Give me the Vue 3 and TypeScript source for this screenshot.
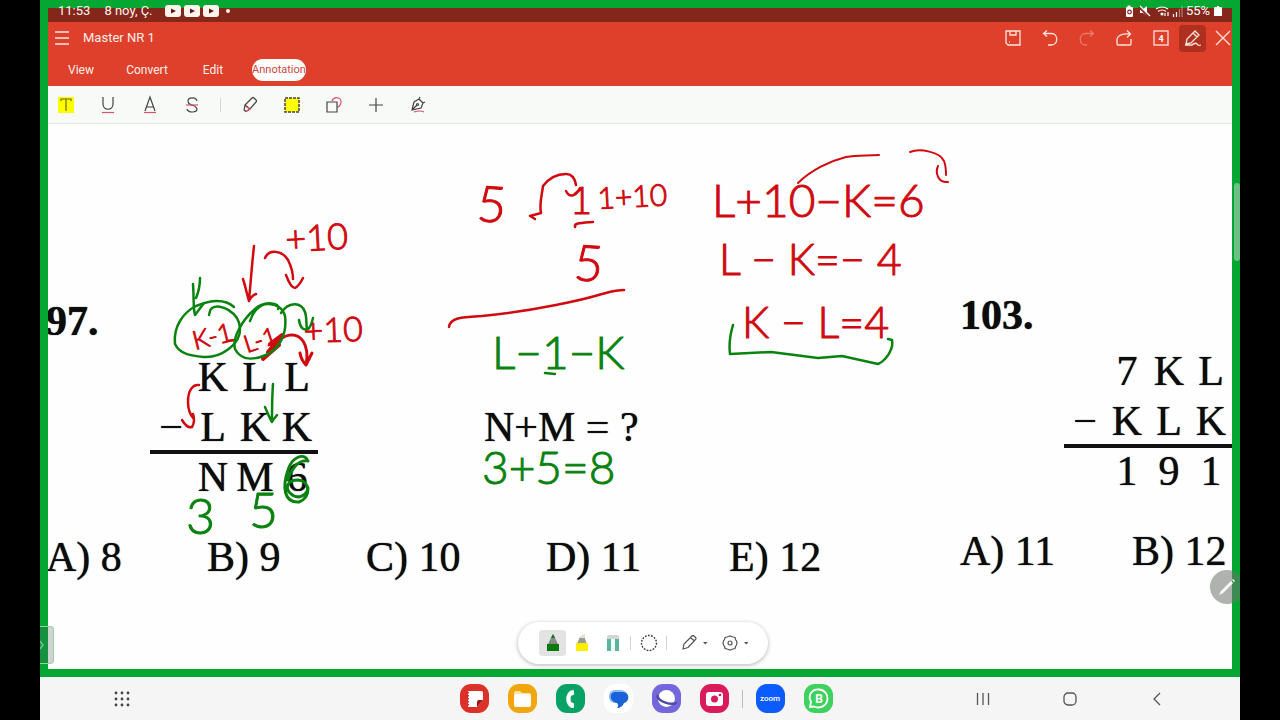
<script setup lang="ts">
interface Writing { t: string; x: number; y: number; s: number; c: 'red' | 'green'; r?: number }
interface Stroke { d: string; c: 'red' | 'green'; w?: number }

const tabs = ['View', 'Convert', 'Edit', 'Annotation']

const problems = [
  {
    no: '97.',
    rows: [['', 'K', 'L', 'L'], ['−', 'L', 'K', 'K'], ['', 'N', 'M', '6']],
    ask: 'N+M = ?',
    options: ['A) 8', 'B) 9', 'C) 10', 'D) 11', 'E) 12'],
  },
  {
    no: '103.',
    rows: [['', '7', 'K', 'L'], ['−', 'K', 'L', 'K'], ['', '1', '9', '1']],
    ask: '',
    options: ['A) 11', 'B) 12'],
  },
]

const writings: Writing[] = [
  { t: '+10', x: 286, y: 252, s: 36, c: 'red', r: -3 },
  { t: '+10', x: 304, y: 343, s: 34, c: 'red', r: -2 },
  { t: 'K-1', x: 195, y: 350, s: 26, c: 'red', r: -14 },
  { t: 'L-1', x: 247, y: 353, s: 24, c: 'red', r: -18 },
  { t: '5', x: 476, y: 221, s: 50, c: 'red', r: 4 },
  { t: '1', x: 570, y: 214, s: 38, c: 'red' },
  { t: '1+10', x: 598, y: 209, s: 30, c: 'red', r: -3 },
  { t: '5', x: 573, y: 280, s: 50, c: 'red', r: 4 },
  { t: 'L+10−K=6', x: 712, y: 217, s: 46, c: 'red' },
  { t: 'L − K=− 4', x: 719, y: 275, s: 43, c: 'red' },
  { t: 'K − L=4', x: 742, y: 338, s: 43, c: 'red' },
  { t: 'L−1−K', x: 492, y: 369, s: 46, c: 'green' },
  { t: '3+5=8', x: 482, y: 484, s: 46, c: 'green' },
  { t: '3', x: 186, y: 534, s: 50, c: 'green' },
  { t: '5', x: 249, y: 528, s: 50, c: 'green' },
]

const strokes: Stroke[] = [
  { c: 'red', d: 'M254 246C252 263 251 280 249 300M243 279C246 288 247 295 249 301C251 297 253 295 256 294' },
  { c: 'red', d: 'M265 258C269 249 282 250 288 260C291 266 293 272 293 279M286 275C289 283 292 288 295 288C299 286 301 282 303 278' },
  { c: 'red', d: 'M227 341L235 340' },
  { c: 'red', w: 4, d: 'M263 359L279 345M268 352L278 340M270 344L282 335' },
  { c: 'red', w: 3, d: 'M275 345C283 334 296 331 303 341C307 347 308 355 306 365M300 353C301 359 303 362 306 365L312 353' },
  { c: 'red', d: 'M199 385C193 384 188 390 188 402C188 411 190 415 194 419M182 420C185 425 189 428 192 427C195 422 194 417 193 414' },
  { c: 'red', d: 'M530 216L541 213M530 216L535 219M541 213C539 204 542 195 543 186C549 178 558 174 566 174C572 174 575 179 576 185M566 191C569 197 575 198 580 188' },
  { c: 'red', d: 'M575 227C574 223 580 223 593 222' },
  { c: 'red', d: 'M449 327C450 317 464 317 482 316C535 311 586 299 602 294C610 292 615 290 624 290' },
  { c: 'red', w: 2, d: 'M798 183C811 170 830 161 846 157C858 155 866 156 879 155' },
  { c: 'red', w: 2, d: 'M910 152C920 148 940 152 944 161C946 166 946 171 946 175M938 166C935 173 938 183 948 182' },
  { c: 'green', d: 'M193 284C194 297 193 307 195 315L204 303M200 278C200 283 199 291 196 298' },
  { c: 'green', d: 'M234 307C223 297 208 301 196 306C184 312 173 326 175 344C180 355 193 356 204 357C220 358 241 345 240 328C239 312 220 303 212 308C209 310 210 313 209 315' },
  { c: 'green', d: 'M278 309C281 302 264 301 255 309C242 320 232 338 235 349C241 361 254 360 266 355C281 348 287 332 285 316C283 308 276 304 269 304C259 303 252 314 250 321' },
  { c: 'green', d: 'M281 313C288 302 301 301 305 312C307 318 306 324 307 330M299 320C300 327 303 331 308 329C311 327 312 322 313 318' },
  { c: 'green', d: 'M273 384C272 397 272 409 272 420M265 407C268 414 270 419 272 422C274 418 276 417 277 415' },
  { c: 'green', d: 'M545 373L555 374' },
  { c: 'green', d: 'M733 325C730 335 729 346 730 354L771 352L818 358L842 356L878 364C885 361 894 350 892 340L888 339' },
  { c: 'green', w: 3, d: 'M308 461C304 452 292 457 288 470C282 487 284 503 299 502C311 498 311 481 298 480C287 480 285 488 290 493C298 501 307 495 308 488M308 461C297 459 290 472 288 480' },
]

const apps = ['notes', 'files', 'phone', 'messages', 'internet', 'camera']
</script>

<template>
  <div class="tablet">
    <div class="screen">
      <header class="status">
        <span class="clock">11:53</span>
        <span class="date">8 noy, Ç.</span>
        <svg v-for="n in 3" :key="n" class="yt" width="16" height="12" viewBox="0 0 16 12"><rect width="16" height="12" rx="3" fill="#fff3ee" /><path d="M6 3.500L11 6L6 8.500Z" fill="#5a1a10" /></svg>
        <i class="dot"></i>
        <span class="grow"></span>
        <svg width="98" height="14" viewBox="0 0 98 14" fill="none" stroke="#fff" stroke-width="1.200">
          <path d="M2 3h1.500V1.500h3V3H8q1 0 1 1v8q0 1-1 1H3q-1 0-1-1V4q0-1 1-1Z" fill="#fff" stroke="none" />
          <circle cx="5.500" cy="8" r="1.800" stroke="#84271a" />
          <path d="M16 5h3l4-3v10l-4-3h-3Z" fill="#fff" stroke="none" /><path d="M15 3l9 9" stroke="#84271a" stroke-width="2" /><path d="M16 2l10 10" />
          <path d="M32 5q6-4 12 0M34 7.500q4-3 8 0" /><circle cx="38" cy="10" r="1.600" fill="#fff" stroke="none" /><path d="M41 9v3M44 12V8" />
          <path d="M49.500 10v3M52.500 8v5" /><path d="M55.500 5v8M58 2v11" opacity=".4" />
          <text x="62" y="11" fill="#fff" stroke="none" class="pct">55%</text>
          <path d="M91 3h2V2h2v1h2q1 0 1 1v8H90V4q0-1 1-1Z" fill="#fff" stroke="none" />
        </svg>
      </header>

      <div class="appbar">
        <div class="titlebar">
          <button class="menu" aria-label="Menu"><svg width="14" height="14" viewBox="0 0 14 14" stroke="#ffe9e2" stroke-width="1.300"><path d="M0 1h14M0 7h14M0 13h14" /></svg></button>
          <h1>Master NR 1</h1>
          <span class="grow"></span>
          <button class="act" aria-label="Save"><svg width="16" height="16" viewBox="0 0 16 16"><path d="M1 1h14v14H3l-2-2ZM5 1v4h6V1M4 12h1" /></svg></button>
          <button class="act" aria-label="Undo"><svg width="16" height="16" viewBox="0 0 16 16"><path d="M5 .500L1.500 3.500L5 6.500M2 3.500h7.500c7 0 7 11.500 0 11.500H6" /></svg></button>
          <button class="act faded" aria-label="Redo"><svg width="16" height="16" viewBox="0 0 16 16"><path d="M11 .500L14.500 3.500L11 6.500M14 3.500H6.500c-7 0-7 11.500 0 11.500H8" /></svg></button>
          <button class="act" aria-label="Share"><svg width="16" height="16" viewBox="0 0 16 16"><path d="M1 9v5q0 1 1 1h12q1 0 1-1V9M1 9C2 5 6 3.500 14 4M11 .500L14.500 4L11 7.500" /></svg></button>
          <button class="act" aria-label="Pages"><svg width="16" height="16" viewBox="0 0 16 16"><rect x="1" y="1" width="14" height="14" /><text x="8" y="11.500" class="count">4</text></svg></button>
          <button class="act on" aria-label="Edit ink"><svg width="18" height="18" viewBox="0 0 18 18"><path d="M2 15l1-5L11 2l4 4l-8 8ZM9 4l4 4M1 16h7q3-3 5-1q1 2 4 1" /></svg></button>
          <button class="act close" aria-label="Close"><svg width="16" height="16" viewBox="0 0 16 16"><path d="M1 1l14 14M15 1L1 15" /></svg></button>
        </div>
        <nav class="tabs">
          <button v-for="t in tabs" :key="t" :class="{ active: t === 'Annotation' }"><span>{{ t }}</span></button>
        </nav>
      </div>

      <div class="tools">
        <button aria-label="Highlight"><svg width="16" height="16" viewBox="0 0 16 16"><path d="M0 0h16v16H0Z" fill="#ff0" stroke="none" /><path d="M3 4V2h10v2M8 2v12" stroke="#6b6b00" /></svg></button>
        <button aria-label="Underline"><svg width="16" height="16" viewBox="0 0 16 16"><path d="M3 0v7c0 7 10 7 10 0V0" /><path d="M2 15.500h12" class="pink" /></svg></button>
        <button aria-label="Squiggly"><svg width="16" height="16" viewBox="0 0 16 16"><path d="M3 14L8 0l5 14M5 10h6" /><path d="M2 15.500h12" class="pink" /></svg></button>
        <button aria-label="Strikeout"><svg width="16" height="16" viewBox="0 0 16 16"><path d="M13 4C12-.5 4 0 4 4q0 3 4 4t5 4c0 4-9 4-10 0" /><path d="M2 8h12" class="pink" /></svg></button>
        <i class="rule"></i>
        <button aria-label="Marker"><svg width="16" height="16" viewBox="0 0 16 16"><path d="M3 8L10 1q1-1 2 0l2 2q1 1 0 2L8 12ZM3 8l-1 5l2 1.500L8 12" /><path d="M3 9l5 3l-4 2.500" class="pink" /></svg></button>
        <button aria-label="Area highlight"><svg width="16" height="16" viewBox="0 0 16 16"><rect x="1" y="1" width="14" height="14" fill="#ff0" stroke-width="1.500" stroke-dasharray="3 1" /></svg></button>
        <button aria-label="Shapes"><svg width="16" height="16" viewBox="0 0 16 16"><path d="M6 4c2-5 9-4 9 1c0 3-2 5-4 5" class="pink" /><path d="M1 5h10v10H1Z" /></svg></button>
        <button aria-label="Insert"><svg width="16" height="16" viewBox="0 0 16 16"><path d="M8 1v14M1 8h14" /></svg></button>
        <button aria-label="Sign"><svg width="16" height="16" viewBox="0 0 16 16"><path d="M2 13L4 5l5-3l4 4l-2 5ZM2 13l5-5M9 2l1-2M13 6l2-1M9 2l4 4" /><circle cx="7.500" cy="7.500" r="1" /><path d="M4 15q6-2 10 0" class="pink" /></svg></button>
      </div>

      <main class="sheet">
        <section v-for="p in problems" :key="p.no" class="problem" :class="{ lead: p.ask }">
          <h2>{{ p.no }}</h2>
          <div class="work">
            <div class="sum">
              <div v-for="(row, i) in p.rows" :key="i" class="line">
                <span v-for="(c, j) in row" :key="j">{{ c }}</span>
              </div>
            </div>
            <p v-if="p.ask">{{ p.ask }}</p>
          </div>
          <div class="options"><span v-for="o in p.options" :key="o">{{ o }}</span></div>
        </section>

        <svg class="ink" width="1200" height="545" viewBox="40 124 1200 545">
          <path v-for="(s, i) in strokes" :key="'s' + i" :d="s.d" :class="s.c" :stroke-width="s.w ?? 2.5" />
          <text v-for="(w, i) in writings" :key="'w' + i" :x="w.x" :y="w.y" :font-size="w.s" :class="w.c" :transform="`rotate(${w.r ?? 0} ${w.x} ${w.y})`">{{ w.t }}</text>
        </svg>

        <div class="pens">
          <button class="on" aria-label="Pen"><svg width="14" height="18" viewBox="0 0 14 18"><path d="M7 0l5 10H2Z" fill="#888" /><path d="M7 0l2 4H5Z" fill="#087a0d" /><path d="M1 10h12v7H1Z" fill="#087a0d" /></svg></button>
          <button aria-label="Highlighter"><svg width="14" height="18" viewBox="0 0 14 18"><path d="M5 3l5-3v5l2 5H2l2-5Z" fill="#999" /><path d="M5 3l5-3v4H5Z" fill="#e4e4d0" /><path d="M1 9h12v8H1Z" fill="#fdee00" /></svg></button>
          <button aria-label="Eraser"><svg width="14" height="18" viewBox="0 0 14 18"><path d="M1 5V3q0-2 2-2h8q2 0 2 2v2Z" fill="#d5d5d5" /><path d="M1 5h4v12H1ZM9 5h4v12H9Z" fill="#58b5a0" /><path d="M5 5h4v12H5Z" fill="#f2f8f6" /></svg></button>
          <i class="rule"></i>
          <button aria-label="Lasso"><svg width="18" height="18" viewBox="0 0 18 18"><circle cx="9" cy="9" r="7.500" fill="none" stroke="#333" stroke-width="1.400" stroke-dasharray="1.700 1.400" /></svg></button>
          <i class="rule last"></i>
          <button class="wide" aria-label="Stylus"><svg width="34" height="16" viewBox="0 0 34 16" fill="none" stroke="#555" stroke-width="1.200"><path d="M2 14l1-5L11 1q1-1 2 0l1.500 1.500q1 1 0 2L7 12.500ZM10 3l3.500 3" /><path d="M22 7h4.500l-2.200 2.500Z" fill="#555" stroke="none" /></svg></button>
          <button class="wide" aria-label="Settings"><svg width="34" height="16" viewBox="0 0 34 16" fill="none" stroke="#555" stroke-width="1.200"><path d="M6.500 1.500L8 1l1.500.5L11 2l2 .5l.5 2l1 1.500l.5 2l-.5 2l-1 1.500l-.5 2l-2 .5l-1.500.5L8 15l-1.500-.5L5 14l-2-.5l-.5-2l-1-1.500L1 8l.5-2l1-1.500l.5-2L5 2Z" /><circle cx="8" cy="8" r="2" /><path d="M22 7h4.500l-2.200 2.500Z" fill="#555" stroke="none" /></svg></button>
        </div>
      </main>

      <div class="frame"></div>
      <i class="thumb"></i>
      <button class="handle" aria-label="Open panel"><svg width="8" height="10" viewBox="0 0 8 10" fill="none" stroke="#6cc787" stroke-width="1.500"><path d="M0 1l3 4l-3 4" /></svg></button>
      <button class="fab" aria-label="Draw"><svg width="18" height="18" viewBox="0 0 18 18"><path d="M1 17l2-4L13 3l2 2L5 15ZM14 2l1-1l2 2l-1 1Z" fill="#fff" /></svg></button>
    </div>

    <footer class="dock">
      <button class="all" aria-label="All apps"><svg width="16" height="16" viewBox="0 0 16 16" fill="#444"><template v-for="r in 3" :key="r"><circle v-for="c in 3" :key="c" :cx="c * 6 - 4" :cy="r * 6 - 4" r="1.400" /></template></svg></button>
      <div class="apps">
        <div class="group">
          <button v-for="a in apps" :key="a" :class="a" :aria-label="a">
            <svg width="29" height="29" viewBox="0 0 29 29">
              <template v-if="a === 'notes'"><path d="M8 7h13q2 0 2 2v7l-6 7H8Z" fill="#fff" /><path d="M23 16l-6 7v-5q0-2 2-2Z" fill="#9c1512" /><path d="M8 8v15" stroke="#d9302a" stroke-width="2" stroke-dasharray="1.500 1.500" /></template>
              <template v-else-if="a === 'files'"><path d="M6 9q0-2 2-2h4l2 2h7q2 0 2 2v2H6Z" fill="#ffe3a0" /><rect x="6" y="10" width="17" height="13" rx="2" fill="#fff" /></template>
              <path v-else-if="a === 'phone'" d="M17 6q1 0 1 1v3q0 1-1 1l-2 1q-1 3 0 6l2 1q1 0 1 1v3q0 1-1 1q-4 0-6-5q-2-5 1-10q2-3 5-3Z" fill="#fff" />
              <template v-else-if="a === 'messages'"><rect x="5" y="6" width="18" height="13" rx="6" fill="#8eb8f5" /><path d="M11 8h8c7 0 7 10 1 11c-1 3-4 5-7 5c2-2 1-4 0-5C5 18 5 8 11 8Z" fill="#1b62d8" /></template>
              <template v-else-if="a === 'internet'"><circle cx="14.500" cy="14.500" r="8.500" fill="#fff" /><path d="M6 11C3 17 23 23 24 18" fill="none" stroke="#5148a8" stroke-width="2.500" /></template>
              <template v-else><rect x="6" y="8" width="17" height="14" rx="3" fill="#fff" /><circle cx="14.500" cy="15" r="3.500" fill="#d91b5c" /><circle cx="20" cy="11" r="1.300" fill="#d91b5c" /></template>
            </svg>
          </button>
        </div>
        <i class="rule"></i>
        <div class="group">
          <button class="zoom">zoom</button>
          <button class="wa" aria-label="WhatsApp Business"><svg width="29" height="29" viewBox="0 0 29 29"><path d="M6 23l1-5C3 10 9 5 15 5.500c12 1 11 18-1 18q-2 0-4-1Z" fill="none" stroke="#fff" stroke-width="1.800" /><text x="15" y="19" class="b">B</text></svg></button>
        </div>
      </div>
      <div class="keys">
        <button aria-label="Recents"><svg width="14" height="14" viewBox="0 0 14 14"><path d="M1.500 1v12M7 1v12M12.500 1v12" /></svg></button>
        <button aria-label="Home"><svg width="14" height="14" viewBox="0 0 14 14"><rect x="1" y="1" width="12" height="12" rx="4" /></svg></button>
        <button aria-label="Back"><svg width="14" height="14" viewBox="0 0 14 14"><path d="M10 1L4 7l6 6" /></svg></button>
      </div>
    </footer>
  </div>
</template>

<style>
html, body { background: #000; }
</style>

<style scoped>
.tablet { display: flex; flex-direction: column; height: 100vh; margin: 0 40px; overflow: hidden; font-family: Roboto, "Liberation Sans", sans-serif; }
.tablet * { box-sizing: border-box; }
button { border: 0; padding: 0; background: none; font: inherit; color: inherit; display: flex; align-items: center; justify-content: center; flex: none; }
svg { display: block; flex: none; }
.grow { flex: 1; }
.screen { flex: 1; min-height: 0; display: flex; flex-direction: column; position: relative; overflow: hidden; background: #fff; }
.frame { position: absolute; inset: 0; border: 8px solid #04a732; pointer-events: none; z-index: 1; }
.status { flex: none; height: 22px; padding: 0 18px; display: flex; align-items: center; background: linear-gradient(#04a732 8px, #84271a 8px); color: #fff3ee; font-size: 13px; line-height: 22px; }
.status > * { position: relative; z-index: 2; }
.clock { margin-right: 14px; }
.date { margin-right: 12px; }
.yt { margin-right: 3px; }
.dot { width: 4px; height: 4px; border-radius: 50%; background: #fff3ee; margin-left: 4px; }
.pct { font-size: 13px; }
.appbar { flex: none; background: #df402b; color: #ffefe9; }
.titlebar { height: 32px; display: flex; align-items: center; }
.menu { width: 28px; height: 32px; margin-left: 8px; }
h1 { margin: 0 0 0 7px; font-size: 13px; line-height: 32px; font-weight: 400; }
.act { width: 37px; height: 27px; }
.act svg { fill: none; stroke: #ffe5dd; stroke-width: 1.3; }
.act.faded { opacity: .35; }
.act.on { width: 27px; background: #b0301f; border-radius: 4px; }
.act.close { width: 34px; }
.count { font-size: 9px; font-weight: 700; text-anchor: middle; fill: #fff; stroke: none; }
.tabs { height: 32px; display: flex; padding-left: 8px; font-size: 12px; }
.tabs button { width: 66px; }
.tabs .active { font-size: 11px; color: #c8473a; }
.tabs .active span { background: #fff; border-radius: 11px; line-height: 22px; }
.tools { flex: none; height: 38px; padding-left: 5px; display: flex; align-items: center; background: #f7faf7; border-bottom: 1px solid #e4e6e4; }
.tools button { width: 42px; height: 36px; }
.tools svg { fill: none; stroke: #444; stroke-width: 1.2; overflow: visible; }
.tools svg .pink { stroke: #d8506a; }
.rule { width: 1px; height: 14px; background: #d4d6d4; }
.tools .rule { margin: 0 8px 0 7px; }
.sheet { flex: 1; min-height: 0; position: relative; display: flex; overflow: hidden; background: #fefefe; color: #0c0c0c; font-family: "Liberation Serif", serif; font-size: 42px; line-height: 50px; white-space: nowrap; }
.problem { flex: none; padding-top: 166px; text-shadow: 0 0 1px #0c0c0c; }
.problem.lead { width: 920px; padding: 172px 0 0 6px; }
h2 { margin: 0 0 6px; font-size: 42px; line-height: 50px; }
.work { display: flex; gap: 166px; margin-left: 104px; }
.work p { margin: 50px 0 0; }
.sum { width: 168px; }
.line { display: grid; grid-template-columns: repeat(4, 42px); text-align: center; height: 50px; }
.line:nth-child(2) { height: 52px; border-bottom: 4px solid #111; }
.line:nth-child(3) { height: 46px; line-height: 46px; }
.options { display: grid; grid-template-columns: 172px auto; margin-top: 32px; }
.lead .options { grid-template-columns: 161px 159px 180px 183px auto; }
.ink { position: absolute; left: 0; top: 0; font-family: Lato, sans-serif; font-weight: 300; fill: none; stroke-linecap: round; stroke-linejoin: round; }
.ink .red { stroke: #cf0a10; }
.ink .green { stroke: #0a820f; }
.ink text { stroke-width: 1px; }
.ink text.red { fill: #cf0a10; }
.ink text.green { fill: #0a820f; }
.pens { position: absolute; left: 50%; bottom: 13px; margin-left: -122px; width: 250px; height: 42px; border-radius: 21px; background: #fff; box-shadow: 0 1px 4px rgba(0, 0, 0, .3); display: flex; align-items: center; padding-left: 21px; }
.pens button { width: 31px; height: 26px; }
.pens button.on { width: 27px; background: #e3e3e3; border-radius: 4px; }
.pens button.wide { width: 41px; }
.pens .rule { margin: 0 2px; }
.pens .last { margin-right: 10px; }
.thumb { position: absolute; right: 0; top: 183px; width: 6px; height: 78px; border-radius: 3px; background: #6cc084; z-index: 2; }
.handle { position: absolute; left: 0; bottom: 13px; width: 14px; height: 38px; z-index: 2; border-radius: 0 4px 4px 0; background: linear-gradient(90deg, #159140 8px, #d0d3d0 8px); border: 1px solid #9acfa8; border-left: 0; justify-content: flex-start; }
.fab { position: absolute; right: -4px; bottom: 73px; width: 34px; height: 34px; border-radius: 50%; background: rgba(110, 115, 110, .55); z-index: 2; }
.dock { flex: none; height: 43px; padding-left: 12px; background: #f4f5f4; display: grid; grid-template-columns: 1fr auto 1fr; align-items: center; }
.all { width: 32px; height: 32px; margin-left: 54px; }
.apps { display: flex; align-items: center; gap: 13px; }
.apps .rule { height: 18px; background: #bbb; }
.group { display: flex; gap: 19px; }
.group button { width: 29px; height: 29px; border-radius: 11px; }
.notes { background: #dc3129; }
.files { background: #f1a60e; }
.phone { background: #08a267; }
.messages { background: #fff; }
.internet { background: #7466dc; }
.camera { background: #d91b5c; }
.group .zoom { background: #0b5cff; color: #fff; font-size: 8px; font-weight: 500; }
.wa { background: #3fd15e; }
.b { font-size: 12px; font-weight: 700; fill: #fff; text-anchor: middle; }
.keys { display: flex; justify-content: flex-end; padding-right: 40px; }
.keys button { width: 87px; height: 32px; }
.keys svg { fill: none; stroke: #555; stroke-width: 1.3; }
</style>
